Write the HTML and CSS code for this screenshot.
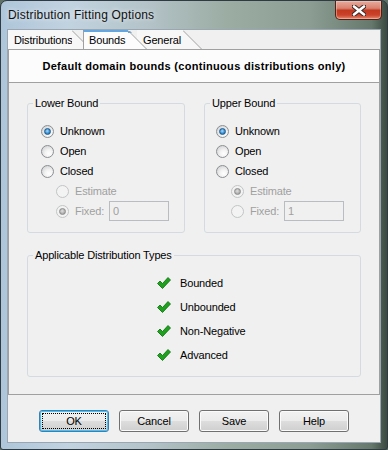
FILE: index.html
```html
<!DOCTYPE html>
<html lang="en">
<head>
  <meta charset="UTF-8">
  <title>Distribution Fitting Options</title>
  <link rel="stylesheet" href="styles.css">
</head>
<body>
  <div class="window">
    <div class="titlebar">
      <span class="title">Distribution Fitting Options</span>
      <button class="close-btn" aria-label="Close">
        <svg width="14" height="11" viewBox="0 0 14 11">
          <path d="M2 1.5 L12 9.5 M12 1.5 L2 9.5" stroke="#3a2a28" stroke-width="4.6" stroke-linecap="round"/>
          <path d="M2 1.5 L12 9.5 M12 1.5 L2 9.5" stroke="#ffffff" stroke-width="2.6" stroke-linecap="round"/>
        </svg>
      </button>
    </div>

    <div class="client">
      <div class="tabs">
        <div class="tab">
          <span class="tab-label">Distributions</span>
          <svg class="tab-slant" width="19" height="19" viewBox="0 0 19 19">
            <polygon points="0,0 19,19 0,19" fill="#f7f7f7"/>
            <line x1="0" y1="0.5" x2="18.5" y2="19" stroke="#a0a0a0"/>
          </svg>
        </div>
        <div class="tab active">
          <span class="tab-label">Bounds</span>
          <svg class="tab-slant" width="19" height="19" viewBox="0 0 19 19">
            <polygon points="0,0 19,19 0,19" fill="#fcfcfc"/>
            <polygon points="0,1 2,1 4,3 0,3" fill="#62a6e2"/>
            <line x1="0" y1="0.5" x2="18.5" y2="19" stroke="#a0a0a0"/>
          </svg>
        </div>
        <div class="tab">
          <span class="tab-label">General</span>
          <svg class="tab-slant" width="19" height="19" viewBox="0 0 19 19">
            <polygon points="0,0 19,19 0,19" fill="#f7f7f7"/>
            <line x1="0" y1="0.5" x2="18.5" y2="19" stroke="#a0a0a0"/>
          </svg>
        </div>
      </div>

      <div class="panel">
        <div class="panel-header">Default domain bounds (continuous distributions only)</div>
        <div class="panel-body">
          <div class="bounds-row">
            <fieldset class="group bound-group">
              <legend>Lower Bound</legend>
              <div class="options">
                <div class="option"><span class="radio checked"><span class="dot"></span></span>Unknown</div>
                <div class="option"><span class="radio"></span>Open</div>
                <div class="option"><span class="radio"></span>Closed</div>
                <div class="sub-options">
                  <div class="option disabled"><span class="radio"></span>Estimate</div>
                  <div class="option disabled"><span class="radio checked"><span class="dot"></span></span>Fixed:<span class="field">0</span></div>
                </div>
              </div>
            </fieldset>

            <fieldset class="group bound-group upper">
              <legend>Upper Bound</legend>
              <div class="options">
                <div class="option"><span class="radio checked"><span class="dot"></span></span>Unknown</div>
                <div class="option"><span class="radio"></span>Open</div>
                <div class="option"><span class="radio"></span>Closed</div>
                <div class="sub-options">
                  <div class="option disabled"><span class="radio checked"><span class="dot"></span></span>Estimate</div>
                  <div class="option disabled"><span class="radio"></span>Fixed:<span class="field">1</span></div>
                </div>
              </div>
            </fieldset>
          </div>

          <fieldset class="group types-group">
            <legend>Applicable Distribution Types</legend>
            <div class="type-list">
              <div class="type-item"><svg class="check" width="14" height="12" viewBox="0 0 14 12"><polygon points="0.5,6.5 3,4 5.5,6.5 11,0.5 13.5,3 5.5,11.5" fill="#1ea21e" stroke="#0b6a0b" stroke-width="0.8" stroke-linejoin="round"/></svg>Bounded</div>
              <div class="type-item"><svg class="check" width="14" height="12" viewBox="0 0 14 12"><polygon points="0.5,6.5 3,4 5.5,6.5 11,0.5 13.5,3 5.5,11.5" fill="#1ea21e" stroke="#0b6a0b" stroke-width="0.8" stroke-linejoin="round"/></svg>Unbounded</div>
              <div class="type-item"><svg class="check" width="14" height="12" viewBox="0 0 14 12"><polygon points="0.5,6.5 3,4 5.5,6.5 11,0.5 13.5,3 5.5,11.5" fill="#1ea21e" stroke="#0b6a0b" stroke-width="0.8" stroke-linejoin="round"/></svg>Non-Negative</div>
              <div class="type-item"><svg class="check" width="14" height="12" viewBox="0 0 14 12"><polygon points="0.5,6.5 3,4 5.5,6.5 11,0.5 13.5,3 5.5,11.5" fill="#1ea21e" stroke="#0b6a0b" stroke-width="0.8" stroke-linejoin="round"/></svg>Advanced</div>
            </div>
          </fieldset>
        </div>
      </div>

      <div class="buttons">
        <button class="btn default">OK</button>
        <button class="btn">Cancel</button>
        <button class="btn">Save</button>
        <button class="btn">Help</button>
      </div>
    </div>
  </div>
</body>
</html>
```

FILE: styles.css
```css
* {
  box-sizing: border-box;
}

body {
  margin: 0;
  font-family: "Liberation Sans", Arial, sans-serif;
  font-size: 11px;
  letter-spacing: -0.15px;
  color: #000;
  background: #5f7166;
}

.window {
  width: 388px;
  height: 450px;
  display: flex;
  flex-direction: column;
  border: 1px solid #2f3a42;
  border-radius: 7px 7px 3px 3px;
  overflow: hidden;
  background: linear-gradient(90deg, #aec6da 0%, #c2d3e0 18%, #b3c3c8 38%, #9cada4 58%, #8c9d93 80%, #66786c 96%, #3c4a42 100%);
}

/* title bar */
.titlebar {
  height: 28px;
  flex-shrink: 0;
  display: flex;
  justify-content: space-between;
  align-items: flex-start;
}

.title {
  padding-left: 7px;
  line-height: 28px;
  font-size: 12px;
  letter-spacing: 0.2px;
  color: #111;
  text-shadow: 0 0 5px rgba(255, 255, 255, 0.9);
}

.close-btn {
  width: 47px;
  height: 19px;
  margin-right: 5px;
  padding: 0;
  display: flex;
  align-items: center;
  justify-content: center;
  border: 1px solid #4e2219;
  border-top: none;
  border-radius: 0 0 5px 5px;
  background: linear-gradient(#e9ab9c 0%, #d98270 40%, #c2391f 52%, #c9432a 78%, #e58a6f 100%);
  box-shadow: inset 0 0 0 1px rgba(255, 210, 200, 0.45);
}

/* client area */
.client {
  flex: 1;
  margin: 0 6px 6px;
  display: flex;
  flex-direction: column;
  border: 1px solid #9aa7b2;
  background: #f0f0f0;
}

.tabs {
  height: 19px;
  display: flex;
}

.tab {
  display: flex;
  height: 19px;
}

.tab + .tab {
  margin-left: -8px;
}

.tab:last-child {
  margin-left: -10px;
}

.tab-label {
  padding: 1px 0 0 6px;
  line-height: 18px;
  background: #f7f7f7;
}

.tab:first-child .tab-label {
  width: 64px;
}

.tab.active {
  position: relative;
  z-index: 1;
}

.tab.active .tab-label {
  width: 45px;
  background: #fcfcfc;
  border-left: 1px solid #a0a0a0;
  border-top: 2px solid #62a6e2;
  padding-top: 0;
  padding-left: 5px;
  line-height: 17px;
}

.tab:last-child .tab-label {
  width: 46px;
}

.panel {
  display: flex;
  flex-direction: column;
  border: 1px solid #a0a0a0;
}

.panel-header {
  height: 33px;
  line-height: 32px;
  text-align: center;
  font-weight: bold;
  letter-spacing: 0.3px;
  background: #fcfcfc;
  border-bottom: 1px solid #a0a0a0;
}

.panel-body {
  padding: 14px 18px 17px;
}

.bounds-row {
  display: flex;
  gap: 19px;
}

/* group boxes */
.group {
  margin: 0;
  min-width: 0;
  padding: 0 0 0 5px;
  border: 1px solid #d3dbe0;
  border-radius: 3px;
}

.group legend {
  padding: 0 2px;
  line-height: 13px;
}

.bound-group {
  width: 158px;
}

.bound-group.upper {
  width: 157px;
}

.options {
  padding: 11px 0 11px 8px;
}

.upper .options {
  padding-left: 6px;
}

.option {
  height: 20px;
  display: flex;
  align-items: center;
}

.sub-options .option {
  padding-left: 15px;
}

.option.disabled {
  color: #a0a0a0;
}

.radio {
  width: 13px;
  height: 13px;
  margin-right: 6px;
  flex-shrink: 0;
  display: flex;
  align-items: center;
  justify-content: center;
  border: 1px solid #8c8f92;
  border-radius: 50%;
  background: radial-gradient(circle at 62% 68%, #ffffff 0%, #f3f3f3 35%, #d2d3d5 85%);
}

.radio .dot {
  width: 7px;
  height: 7px;
  border-radius: 50%;
  border: 1px solid #1e5a8c;
  background: radial-gradient(circle at 45% 40%, #a8dcff 0%, #3a8fd2 55%, #1b5e98 100%);
}

.disabled .radio {
  border-color: #c2c4c6;
  background: #f3f3f3;
}

.disabled .radio .dot {
  border-color: #8d8d8d;
  background: radial-gradient(circle at 45% 40%, #e0e0e0 0%, #b0b0b0 60%, #909090 100%);
}

.field {
  width: 60px;
  height: 20px;
  margin-left: 5px;
  padding-left: 3px;
  line-height: 18px;
  border: 1px solid #b9bcc0;
  color: #a0a0a0;
}

.types-group {
  margin-top: 16px;
}

.type-list {
  padding: 9px 0 9px 124px;
}

.type-item {
  height: 24px;
  display: flex;
  align-items: center;
}

.check {
  margin-right: 9px;
}

/* dialog buttons */
.buttons {
  display: flex;
  justify-content: center;
  gap: 10px;
  padding-top: 15px;
}

.btn {
  width: 70px;
  height: 22px;
  padding: 0;
  font-family: inherit;
  font-size: 11px;
  letter-spacing: inherit;
  color: #000;
  border: 1px solid #707070;
  border-radius: 3px;
  background: linear-gradient(#f2f2f2 0%, #ebebeb 48%, #dddddd 52%, #cfcfcf 100%);
  box-shadow: inset 0 0 0 1px #fbfbfb;
}

.btn.default {
  border-color: #3c7fb1;
  box-shadow: inset 0 0 0 1px #48c2f5;
  outline: 1px dotted #000;
  outline-offset: -4px;
}
```
